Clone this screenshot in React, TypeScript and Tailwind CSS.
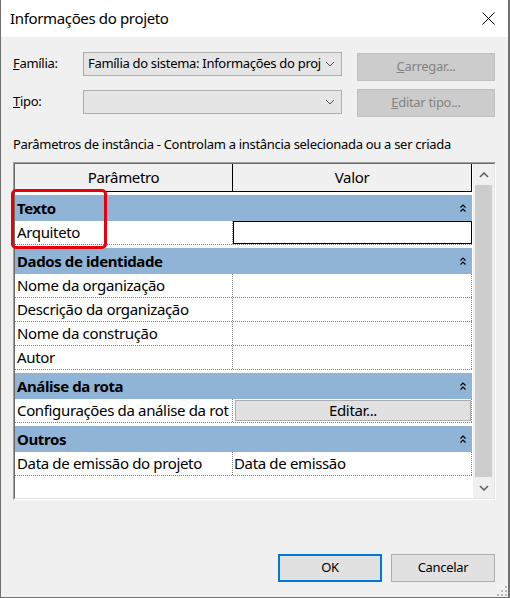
import React from 'react';

const font = "font-['Segoe_UI','Noto_Sans',sans-serif]";

function Chevron({ up = false }: { up?: boolean }) {
  return (
    <svg width="10" height="6" viewBox="0 0 10 6" className="block">
      <polyline
        points={up ? '1,5 5,1 9,5' : '1,1 5,5 9,1'}
        fill="none"
        stroke="#606060"
        strokeWidth="1.6"
      />
    </svg>
  );
}

function ComboArrow() {
  return (
    <svg width="10" height="6" viewBox="0 0 10 6" className="block">
      <polyline points="1,1 5,5 9,1" fill="none" stroke="#555" strokeWidth="1" />
    </svg>
  );
}

function Collapse() {
  return (
    <svg width="6" height="8" viewBox="0 0 6 8" className="block">
      <polyline points="0.5,3.5 3,1 5.5,3.5" fill="none" stroke="#000" strokeWidth="1.2" />
      <polyline points="0.5,7.5 3,5 5.5,7.5" fill="none" stroke="#000" strokeWidth="1.2" />
    </svg>
  );
}

function Group({ title }: { title: string }) {
  return (
    <div className="pt-[3px] bg-white w-[457px]">
      <div className="h-[26px] bg-[#8fb4d6] flex items-center justify-between pl-[2px] pr-[6px]">
        <span className="text-[15px] tracking-[-0.4px] font-bold text-black">{title}</span>
        <Collapse />
      </div>
    </div>
  );
}

function Row({ name, children }: { name: string; children?: React.ReactNode }) {
  return (
    <div className="flex h-[24px] w-[457px] border-b border-dotted border-[#808080]">
      <div className="w-[218px] border-r border-dotted border-[#808080] pl-[2px] flex items-center text-[15px] tracking-[-0.35px] text-black whitespace-nowrap overflow-hidden">
        {name}
      </div>
      <div className="w-[239px] border-r border-dotted border-[#808080] flex items-stretch text-[15px] tracking-[-0.35px] text-black">
        {children}
      </div>
    </div>
  );
}

export default function App() {
  return (
    <div className={`${font} tracking-[-0.3px] relative w-[510px] h-[598px] bg-[#f0f0f0] border-l border-r-2 border-b border-[#707070] flex flex-col`}>
      {/* Title bar */}
      <div className="h-[37px] bg-white flex items-center justify-between pl-[9px] pr-[13px]">
        <span className="text-[15px] tracking-[-0.35px] text-black">Informações do projeto</span>
        <svg width="13" height="13" viewBox="0 0 13 13" className="block">
          <line x1="0.5" y1="0.5" x2="12.5" y2="12.5" stroke="#000" strokeWidth="1" />
          <line x1="12.5" y1="0.5" x2="0.5" y2="12.5" stroke="#000" strokeWidth="1" />
        </svg>
      </div>

      <div className="flex flex-col pl-[12px] pr-[12px]">
        {/* Família */}
        <div className="flex items-start mt-[15px]">
          <div className="w-[70px] h-[24px] flex items-center text-[13px] text-black">
            <span><span className="underline">F</span>amília:</span>
          </div>
          <div className="w-[259px] h-[24px] bg-[#e5e5e5] border border-[#adadad] flex items-center justify-between pl-[4px] pr-[6px] text-[13px] text-black">
            <span className="whitespace-nowrap overflow-hidden">Família do sistema: Informações do proj</span>
            <ComboArrow />
          </div>
          <div className="ml-[15px] mt-[1px] w-[138px] h-[28px] bg-[#cccccc] border border-[#bfbfbf] flex items-center justify-center text-[13px] text-[#838383]">
            <span><span className="underline">C</span>arregar...</span>
          </div>
        </div>

        {/* Tipo */}
        <div className="flex items-start mt-[8px]">
          <div className="w-[70px] h-[24px] mt-[1px] flex items-center text-[13px] text-black">
            <span><span className="underline">T</span>ipo:</span>
          </div>
          <div className="w-[259px] h-[24px] mt-[1px] bg-[#e5e5e5] border border-[#adadad] flex items-center justify-end pr-[6px]">
            <ComboArrow />
          </div>
          <div className="ml-[15px] w-[138px] h-[28px] bg-[#cccccc] border border-[#bfbfbf] flex items-center justify-center text-[13px] text-[#838383]">
            <span><span className="underline">E</span>ditar tipo...</span>
          </div>
        </div>

        <div className="mt-[19px] h-[18px] flex items-center text-[13px] text-black whitespace-nowrap">
          Parâmetros de instância - Controlam a instância selecionada ou a ser criada
        </div>

        {/* Table */}
        <div className="mt-[8px] w-[483px] h-[338px] border border-t-[#a0a0a0] border-l-[#a0a0a0] border-r-white border-b-white">
          <div className="w-full h-full border border-t-[#696969] border-l-[#696969] border-r-[#e3e3e3] border-b-[#e3e3e3] flex">
            <div className="flex-1 bg-white flex flex-col">
              <div className="flex h-[28px] bg-[#f0f0f0] border-b border-black w-[457px]">
                <div className="w-[218px] border-r border-black flex items-center justify-center text-[15px] tracking-[-0.35px] text-black">
                  Parâmetro
                </div>
                <div className="w-[239px] border-r border-black flex items-center justify-center text-[15px] tracking-[-0.35px] text-black">
                  Valor
                </div>
              </div>

              <Group title="Texto" />
              <Row name="Arquiteto">
                <div className="flex-1 border border-black bg-white -mr-px" />
              </Row>

              <Group title="Dados de identidade" />
              <Row name="Nome da organização" />
              <Row name="Descrição da organização" />
              <Row name="Nome da construção" />
              <Row name="Autor" />

              <Group title="Análise da rota" />
              <Row name="Configurações da análise da rot">
                <div className="flex-1 my-[1px] ml-[2px] bg-[#e1e1e1] border border-[#adadad] flex items-center justify-center">
                  Editar...
                </div>
              </Row>

              <Group title="Outros" />
              <Row name="Data de emissão do projeto">
                <div className="flex items-center pl-[1px] whitespace-nowrap">Data de emissão</div>
              </Row>
            </div>

            {/* Scrollbar */}
            <div className="w-[21px] bg-[#f0f0f0] flex flex-col">
              <div className="h-[21px] flex items-center justify-center">
                <Chevron up />
              </div>
              <div className="flex-1 mx-[2px] bg-[#cdcdcd]" />
              <div className="h-[21px] flex items-center justify-center">
                <Chevron />
              </div>
            </div>
          </div>
        </div>

        {/* Footer */}
        <div className="mt-[54px] flex justify-end gap-[9px] pr-[1px]">
          <div className="w-[104px] h-[28px] bg-[#e1e1e1] border-2 border-[#0078d7] flex items-center justify-center text-[13px] text-black">
            OK
          </div>
          <div className="w-[104px] h-[28px] bg-[#e1e1e1] border border-[#adadad] flex items-center justify-center text-[13px] text-black">
            Cancelar
          </div>
        </div>
      </div>

      {/* Resize grip */}
      <svg width="10" height="10" viewBox="0 0 10 10" className="absolute right-[1px] bottom-[1px]">
        <rect x="8" y="0" width="2" height="2" fill="#b8b8b8" />
        <rect x="4" y="4" width="2" height="2" fill="#b8b8b8" />
        <rect x="8" y="4" width="2" height="2" fill="#b8b8b8" />
        <rect x="0" y="8" width="2" height="2" fill="#b8b8b8" />
        <rect x="4" y="8" width="2" height="2" fill="#b8b8b8" />
        <rect x="8" y="8" width="2" height="2" fill="#b8b8b8" />
      </svg>

      {/* Annotation highlight */}
      <div className="absolute left-[10px] top-[189px] w-[96px] h-[60px] border-[3px] border-[#e8000b] rounded-[5px] pointer-events-none" />
    </div>
  );
}
